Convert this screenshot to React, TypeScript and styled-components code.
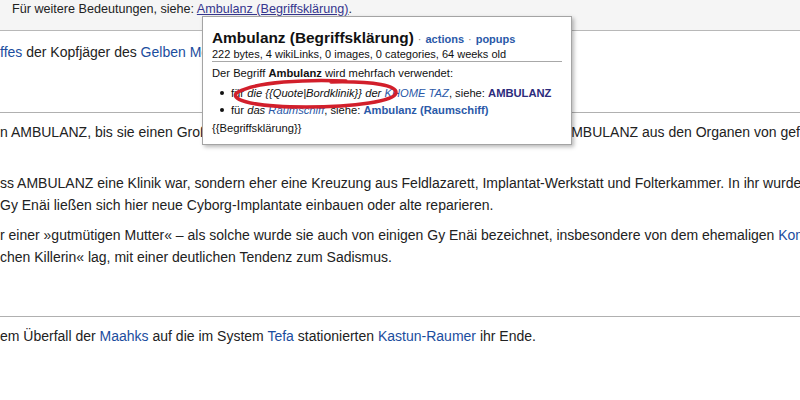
import styled, { createGlobalStyle } from 'styled-components';

const GlobalStyle = createGlobalStyle`
  html, body {
    margin: 0;
    padding: 0;
    background: #fff;
  }
  body {
    font-family: "Liberation Sans", Arial, sans-serif;
    color: #222;
  }
`;

const Page = styled.div`
  position: relative;
  width: 800px;
  height: 400px;
  overflow: hidden;
  background: #fff;
`;

const Hatnote = styled.div`
  height: 31px;
  padding: 1px 0 0 12px;
  box-sizing: border-box;
  background: #f5f5f5;
  border-bottom: 1px solid #b8b8b8;
  font-size: 12.6px;
  line-height: 16px;
  white-space: nowrap;
`;

const Section = styled.section<{ $top: number; $bottom: number; $border?: boolean }>`
  padding: ${(p) => p.$top}px 0 ${(p) => p.$bottom}px;
  border-bottom: ${(p) => (p.$border ? '1px solid #b0b0b0' : '0')};
`;

const Para = styled.p<{ $gap?: number }>`
  margin: ${(p) => p.$gap || 0}px 0 0;
  font-size: 14px;
  line-height: 22px;
  white-space: nowrap;
`;

const Link = styled.a<{ $visited?: boolean }>`
  color: ${(p) => (p.$visited ? '#36368e' : '#1b4d9e')};
  text-decoration: ${(p) => (p.$visited ? 'underline' : 'none')};
  cursor: pointer;
`;

const Popup = styled.div`
  position: absolute;
  left: 202px;
  top: 16px;
  width: 370px;
  box-sizing: border-box;
  padding: 12px 9px 8px;
  background: #fff;
  border: 1px solid #a4a4a4;
  box-shadow: 2px 2px 4px rgba(0, 0, 0, 0.28);
  color: #111;
`;

const PopupTitle = styled.div`
  font-size: 15.4px;
  font-weight: bold;
  line-height: 18px;
  white-space: nowrap;
`;

const Tools = styled.span`
  font-size: 11px;

  a {
    color: #2a59a8;
    font-weight: bold;
    text-decoration: none;
  }
`;

const Dot = styled.span`
  color: #888;
  font-weight: normal;
  margin: 0 4px;
`;

const Meta = styled.div`
  font-size: 11px;
  line-height: 13px;
  border-bottom: 1px solid #a8a8a8;
  white-space: nowrap;
`;

const PopupBody = styled.div`
  padding-top: 3px;
  font-size: 11.2px;
  line-height: 16px;
  white-space: nowrap;
`;

const Bullets = styled.ul`
  list-style: none;
  margin: 4px 0 1px;
  padding: 0 0 0 8px;

  li {
    line-height: 17px;
  }

  li::before {
    content: '';
    display: inline-block;
    width: 4px;
    height: 4px;
    margin: 0 7px 2px 0;
    border-radius: 50%;
    background: #111;
    vertical-align: middle;
  }
`;

const PopLink = styled.a<{ $strong?: boolean; $dark?: boolean }>`
  color: ${(p) => (p.$dark ? '#2b2b7c' : '#2a59a8')};
  font-weight: ${(p) => (p.$strong ? 'bold' : 'normal')};
  text-decoration: none;
`;

const Marker = styled.svg`
  position: absolute;
  left: 226px;
  top: 74px;
  width: 180px;
  height: 42px;
  pointer-events: none;
`;

const App = () => {
  return (
    <>
      <GlobalStyle />
      <Page>
        <Hatnote>
          Für weitere Bedeutungen, siehe: <Link $visited>Ambulanz (Begriffsklärung)</Link>.
        </Hatnote>

        <Section $top={10} $bottom={49} $border>
          <Para>
            <Link>ffes</Link> der Kopfjäger des <Link>Gelben Mondes</Link>.
          </Para>
        </Section>

        <Section $top={8} $bottom={48} $border>
          <Para>
            n AMBULANZ, bis sie einen Großteil ihrer Besatzung verloren hatte. Danach ernährte sich AMBULANZ aus den Organen von gefangenen Gegnern.
          </Para>
          <Para $gap={29}>
            ss AMBULANZ eine Klinik war, sondern eher eine Kreuzung aus Feldlazarett, Implantat-Werkstatt und Folterkammer. In ihr wurden
            <br />
            Gy Enäi ließen sich hier neue Cyborg-Implantate einbauen oder alte reparieren.
          </Para>
          <Para $gap={8}>
            r einer »gutmütigen Mutter« – als solche wurde sie auch von einigen Gy Enäi bezeichnet, insbesondere von dem ehemaligen <Link>Kommandanten</Link>
            <br />
            chen Killerin« lag, mit einer deutlichen Tendenz zum Sadismus.
          </Para>
        </Section>

        <Section $top={8} $bottom={0}>
          <Para>
            em Überfall der <Link>Maahks</Link> auf die im System <Link>Tefa</Link> stationierten <Link>Kastun-Raumer</Link> ihr Ende.
          </Para>
        </Section>

        <Popup>
          <PopupTitle>
            Ambulanz (Begriffsklärung)
            <Tools>
              <Dot>·</Dot>
              <a>actions</a>
              <Dot>·</Dot>
              <a>popups</a>
            </Tools>
          </PopupTitle>
          <Meta>222 bytes, 4 wikiLinks, 0 images, 0 categories, 64 weeks old</Meta>
          <PopupBody>
            Der Begriff <b>Ambulanz</b> wird mehrfach verwendet:
            <Bullets>
              <li>
                für <i>die {'{{Quote|Bordklinik}}'} der <PopLink>KHOME TAZ</PopLink></i>, siehe: <PopLink $strong $dark>AMBULANZ</PopLink>
              </li>
              <li>
                für <i>das <PopLink>Raumschiff</PopLink></i>, siehe: <PopLink $strong>Ambulanz (Raumschiff)</PopLink>
              </li>
            </Bullets>
            {'{{Begriffsklärung}}'}
          </PopupBody>
        </Popup>

        <Marker viewBox="0 0 180 42">
          <path
            d="M120 7 C80 5 30 8 12 18 C2 24 20 33 80 33 C130 33 168 27 170 19 C171 12 150 7 105 8"
            fill="none"
            stroke="#d21f2b"
            strokeWidth="3.5"
            strokeLinecap="round"
          />
        </Marker>
      </Page>
    </>
  );
};

export default App;
